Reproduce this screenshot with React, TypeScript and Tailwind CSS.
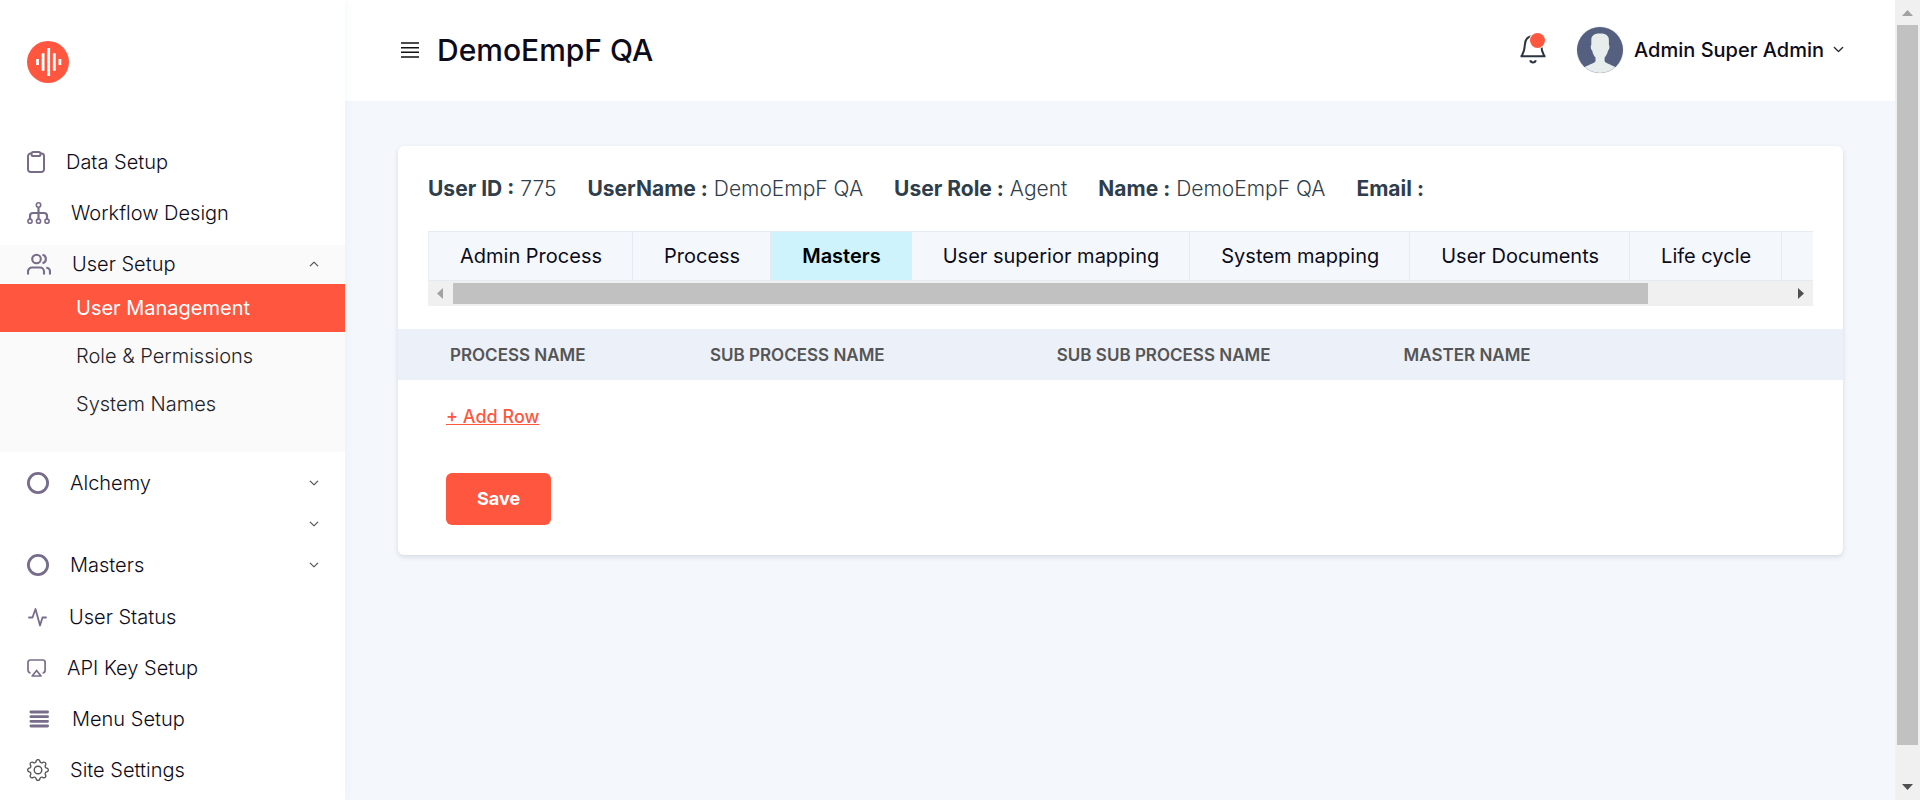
import type { ReactNode } from "react";
import { BsChevronDown, BsChevronUp, BsGear } from "react-icons/bs";

const ICON = "#776d8b";

const ClipboardIcon = () => (
  <svg width="18" height="22" viewBox="0 0 18 22" fill="none" stroke={ICON} strokeWidth="2" aria-hidden="true">
    <path d="M4.500 2.600H3.500A2.500 2.500 0 0 0 1 5.100V18.500A2.500 2.500 0 0 0 3.500 21H14.500A2.500 2.500 0 0 0 17 18.500V5.100A2.500 2.500 0 0 0 14.500 2.600H13.500" />
    <rect x="4.600" y="1" width="8.800" height="4" rx="1.600" />
  </svg>
);

const WorkflowIcon = () => (
  <svg width="23" height="22" viewBox="0 0 23 22" fill="none" stroke={ICON} strokeWidth="1.6" aria-hidden="true">
    <circle cx="11.500" cy="3" r="2.200" />
    <path d="M11.500 5.300V17M3 17V14A3 3 0 0 1 6 11H17A3 3 0 0 1 20 14V17" strokeWidth="2.2" />
    <circle cx="3" cy="19.200" r="2.100" />
    <circle cx="11.500" cy="19.200" r="2.100" />
    <circle cx="20" cy="19.200" r="2.100" />
  </svg>
);

const UsersIcon = () => (
  <svg width="24" height="22" viewBox="0 0 24 22" fill="none" stroke={ICON} strokeWidth="2.1" aria-hidden="true">
    <circle cx="9.500" cy="6" r="4.300" />
    <path d="M1 21.500V18.500A4 4 0 0 1 5 14.500H13A4 4 0 0 1 17 18.500V21.500" />
    <path d="M15.500 1.800A4.300 4.300 0 0 1 15.500 10.200M19.300 14.700A4 4 0 0 1 23 18.700V21.500" />
  </svg>
);

const CircleIcon = () => (
  <svg width="22" height="22" viewBox="0 0 22 22" fill="none" stroke={ICON} strokeWidth="2.8" aria-hidden="true">
    <circle cx="11" cy="11" r="9.600" />
  </svg>
);

const ActivityIcon = () => (
  <svg width="21" height="20" viewBox="0 0 21 20" fill="none" stroke={ICON} strokeWidth="1.800" strokeLinejoin="round" strokeLinecap="round" aria-hidden="true">
    <path d="M2 10.500H5.500L8.500 2L13 18.500L15.500 10.500H19" />
  </svg>
);

const CastIcon = () => (
  <svg width="19" height="18" viewBox="0 0 19 18" fill="none" stroke={ICON} strokeWidth="1.700" strokeLinejoin="round" aria-hidden="true">
    <path d="M3.500 13.800A2.500 2.500 0 0 1 1 11.300V3.300A2.300 2.300 0 0 1 3.300 1H15.800A2.300 2.300 0 0 1 18.100 3.300V11.300A2.500 2.500 0 0 1 15.600 13.800" />
    <path d="M9.600 11.500L14 17H5.200Z" />
  </svg>
);

const MenuIcon = () => (
  <svg width="24" height="20" viewBox="0 0 24 20" stroke={ICON} strokeWidth="2.8" strokeLinecap="round" aria-hidden="true">
    <path d="M3.900 3H20.600M3.900 7.700H20.600M3.900 12.300H20.600M3.900 17H20.600" />
  </svg>
);

const Logo = () => (
  <svg width="42" height="42" viewBox="0 0 42 42" aria-label="Home" role="img">
    <circle cx="21" cy="21" r="21" fill="#ff563f" />
    <path d="M10.500 18V24M16.100 12.300V29.700M21.700 7V35M27.300 12.300V29.700M32.900 18V24" stroke="#fff" strokeWidth="2.8" />
  </svg>
);

const Bell = () => (
  <svg width="26" height="29" viewBox="0 0 26 29" fill="none" stroke="#2b3440" strokeWidth="2" aria-hidden="true">
    <path d="M0.500 21.300H25.500M1.800 21C4 17 4.700 14 4.900 9.500C5.200 4.500 8 1.200 13 1.200S20.800 4.500 21.100 9.500C21.300 14 22 17 24.200 21" />
    <path d="M10.200 25.300C10.900 28.300 15.100 28.300 15.800 25.300" />
  </svg>
);

const Avatar = () => (
  <svg width="48" height="48" viewBox="0 0 48 48" role="img" aria-label="Profile picture">
    <defs>
      <clipPath id="avatar-disc">
        <circle cx="24" cy="24" r="23" />
      </clipPath>
    </defs>
    <circle cx="24" cy="24" r="23.500" fill="#e2e5e8" />
    <g clipPath="url(#avatar-disc)">
      <rect width="48" height="48" fill="#556080" />
      <path
        d="M15.300 14C15.300 9.500 18.500 7.600 24 7.600S32.900 9.500 32.900 14V19C33.900 19.500 33.500 23.500 32 24.500C31.500 27.500 30 30 28.600 31.500V35C28.600 37 36 39 40 41.500V48H8V41.500C12 39 19.500 37 19.500 35V31.500C18 30 16.700 27.500 16.200 24.500C14.700 23.500 14.300 19.500 15.300 19Z"
        fill="#e7eced"
      />
    </g>
  </svg>
);

function NavLink({ icon, label }: { icon: ReactNode; label: string }) {
  return (
    <a href="#" className="flex h-[51px] shrink-0 items-center gap-[21px] pl-[27px]">
      {icon}
      <span>{label}</span>
    </a>
  );
}

function NavGroup({ icon, label, open = false }: { icon?: ReactNode; label?: string; open?: boolean }) {
  return (
    <button
      type="button"
      aria-expanded={open}
      aria-label={label ?? "More"}
      className={
        open
          ? "flex h-[39px] w-full shrink-0 items-center gap-[21px] pr-[26px] pb-0.5 pl-[27px] text-left"
          : "flex h-[41px] w-full shrink-0 items-center gap-[21px] pr-[26px] pl-[27px] text-left"
      }
    >
      {icon}
      <span className="grow">{label}</span>
      {open ? (
        <BsChevronUp size={10} color="#333" strokeWidth={0.8} />
      ) : (
        <BsChevronDown size={10} color="#333" strokeWidth={0.8} />
      )}
    </button>
  );
}

const details = [
  ["User ID", "775"],
  ["UserName", "DemoEmpF QA"],
  ["User Role", "Agent"],
  ["Name", "DemoEmpF QA"],
  ["Email", ""],
];

const tabs = [
  "Admin Process",
  "Process",
  "Masters",
  "User superior mapping",
  "System mapping",
  "User Documents",
  "Life cycle",
  "Comments",
];

export default function App() {
  return (
    <div className="flex h-screen overflow-hidden bg-[#f4f8fd] font-['Inter',sans-serif] text-[20px] leading-6 text-[#0d0b1a]">
      <aside className="z-10 flex w-[345px] shrink-0 flex-col bg-white font-light shadow-[0_0_10px_rgba(82,120,170,0.07)]">
        <a href="#" className="mt-[41px] mb-[53px] ml-[27px] w-[42px]">
          <Logo />
        </a>
        <nav className="flex flex-col">
          <NavLink icon={<ClipboardIcon />} label="Data Setup" />
          <NavLink icon={<WorkflowIcon />} label="Workflow Design" />
          <div className="mt-[7px] mb-[10px] bg-[#fafafa] pb-6">
            <NavGroup icon={<UsersIcon />} label="User Setup" open />
            <a href="#" aria-current="page" className="flex h-12 items-center bg-[#ff563f] pl-[76px] font-normal text-white">
              User Management
            </a>
            <a href="#" className="flex h-12 items-center pl-[76px] text-[#1f2328]">
              Role &amp; Permissions
            </a>
            <a href="#" className="flex h-12 items-center pl-[76px] text-[#1f2328]">
              System Names
            </a>
          </div>
          <NavGroup icon={<CircleIcon />} label="Alchemy" />
          <NavGroup />
          <NavGroup icon={<CircleIcon />} label="Masters" />
          <div className="mt-[6px] flex flex-col">
            <NavLink icon={<ActivityIcon />} label="User Status" />
            <NavLink icon={<CastIcon />} label="API Key Setup" />
            <NavLink icon={<MenuIcon />} label="Menu Setup" />
            <NavLink icon={<BsGear size={22} color="#555" />} label="Site Settings" />
          </div>
        </nav>
      </aside>

      <div className="flex min-w-0 grow flex-col">
        <header className="flex h-[101px] shrink-0 items-center bg-white pr-[51px] pb-0.5 pl-[56px]">
          <button type="button" aria-label="Toggle menu">
            <svg width="18" height="16" viewBox="0 0 18 16" stroke="#111" strokeWidth="1.5" aria-hidden="true">
              <path d="M0 1H18M0 5.700H18M0 10.300H18M0 15H18" />
            </svg>
          </button>
          <h1 className="ml-[18px] grow text-[30px] leading-9 font-medium">DemoEmpF QA</h1>
          <button type="button" aria-label="Notifications" className="relative mr-[30px]">
            <Bell />
            <span className="absolute -top-0.5 right-px size-[15px] rounded-full bg-[#ff563f] ring-1 ring-white" />
          </button>
          <button type="button" className="flex items-center font-medium">
            <Avatar />
            <span className="ml-[10px]">Admin Super Admin</span>
            <BsChevronDown size={11} strokeWidth={1} className="ml-[9px]" />
          </button>
        </header>

        <main className="py-[45px] pr-[52px] pl-[53px]">
          <section className="rounded-md bg-white pb-[30px] shadow-[0_2px_5px_rgba(50,60,80,0.16)]">
            <dl className="flex gap-[31px] px-[30px] pt-[31px] text-[21px] text-[#2f3e4c]">
              {details.map(([term, value]) => (
                <div key={term} className="flex gap-1.5">
                  <dt className="font-bold">{term} :</dt>
                  <dd className="font-light">{value}</dd>
                </div>
              ))}
            </dl>

            <div className="mx-[30px] mt-[30px] overflow-hidden">
              <div role="tablist" className="flex w-max border-l border-[#e6eaf2]">
                {tabs.map((tab) => (
                  <button
                    key={tab}
                    type="button"
                    role="tab"
                    aria-selected={tab === "Masters"}
                    className={
                      tab === "Masters"
                        ? "h-[50px] border-y border-r border-[#e6eaf2] bg-[#cef3fc] pr-[30px] pl-[31px] font-semibold whitespace-nowrap text-black"
                        : "h-[50px] border-y border-r border-[#e6eaf2] bg-[#f4f8fd] pr-[30px] pl-[31px] whitespace-nowrap"
                    }
                  >
                    {tab}
                  </button>
                ))}
              </div>
              <div className="flex h-[25px] items-center bg-[#f0f0f0]" aria-hidden="true">
                <svg width="25" height="25" viewBox="0 0 25 25">
                  <path d="M15 7V18L9 12.500Z" fill="#a2a2a2" />
                </svg>
                <div className="flex grow">
                  <div className="h-[21px] w-[89.500%] bg-[#c1c1c1]" />
                </div>
                <svg width="25" height="25" viewBox="0 0 25 25">
                  <path d="M10 7V18L16 12.500Z" fill="#505050" />
                </svg>
              </div>
            </div>

            <table className="mt-[23px] w-full table-fixed text-left text-[17px] text-[#555]">
              <thead className="bg-[#ecf0f9]">
                <tr className="h-[51px]">
                  <th className="w-[312px] pl-[52px] font-semibold">PROCESS NAME</th>
                  <th className="w-[24%] font-semibold">SUB PROCESS NAME</th>
                  <th className="w-[24%] font-semibold">SUB SUB PROCESS NAME</th>
                  <th className="font-semibold">MASTER NAME</th>
                </tr>
              </thead>
              <tbody />
            </table>

            <div className="flex flex-col items-start gap-11 px-12 pt-[25px] text-[18px]">
              <button type="button" className="font-medium text-[#ff563f] underline">
                + Add Row
              </button>
              <button type="button" className="h-[52px] rounded-md bg-[#ff563f] px-[31px] font-bold text-white">
                Save
              </button>
            </div>
          </section>
        </main>
      </div>

      <div className="flex w-[25px] shrink-0 flex-col items-center bg-[#f0f0f0]" aria-hidden="true">
        <svg width="25" height="25" viewBox="0 0 25 25">
          <path d="M7 16H18L12.500 10Z" fill="#a2a2a2" />
        </svg>
        <div className="w-[21px] grow">
          <div className="h-[96%] bg-[#c1c1c1]" />
        </div>
        <svg width="25" height="25" viewBox="0 0 25 25">
          <path d="M7 9H18L12.500 15Z" fill="#505050" />
        </svg>
      </div>
    </div>
  );
}
